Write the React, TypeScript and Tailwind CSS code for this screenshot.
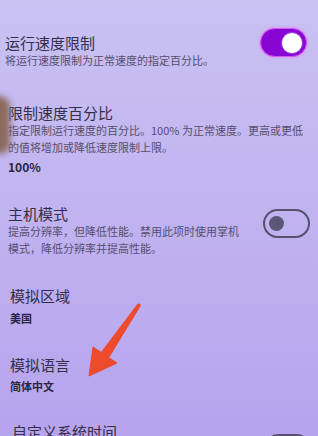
import React from "react";

const font = {
  fontFamily: '"Noto Sans CJK SC", "Noto Sans", "Liberation Sans", sans-serif',
};

function ToggleOn() {
  return (
    <div className="flex h-[29px] w-[47px] shrink-0 items-center justify-end rounded-full border border-[#d65cf0] bg-[#8806d4] pr-[3px] shadow-[0_0_3px_#e37af5]">
      <span className="h-[22px] w-[22px] rounded-full border border-[#9b3fe0] bg-white" />
    </div>
  );
}

function ToggleOff() {
  return (
    <div className="flex h-[29px] w-[47px] shrink-0 items-center rounded-full border-2 border-[#55506c] pl-[4px]">
      <span className="h-[15px] w-[15px] rounded-full bg-[#5c5676]" />
    </div>
  );
}

function Title({ children }: { children: React.ReactNode }) {
  return <div className="text-[15px] leading-[18px] whitespace-nowrap text-[#343049]">{children}</div>;
}

function Desc({ children }: { children: React.ReactNode }) {
  return <div className="text-[11px] leading-[17px] whitespace-nowrap text-[#554f6e]">{children}</div>;
}

function Value({ children, className = "" }: { children: React.ReactNode; className?: string }) {
  return (
    <div className={`text-[11px] font-bold leading-[16px] whitespace-nowrap text-[#2a2540] ${className}`}>
      {children}
    </div>
  );
}

export default function App() {
  return (
    <div
      style={font}
      className="relative h-[436px] w-[318px] overflow-hidden bg-linear-to-b from-[#c9c1f2] via-[#c0b3f0] to-[#b7a3ee] pt-[34px]"
    >
      {/* 运行速度限制 */}
      <div className="flex items-start justify-between pl-[5px] pr-[11px]">
        <div>
          <Title>运行速度限制</Title>
          <Desc>将运行速度限制为正常速度的指定百分比。</Desc>
        </div>
        <div className="-mt-[6px]">
          <ToggleOn />
        </div>
      </div>

      {/* 限制速度百分比 */}
      <div className="mt-[35px] pl-[8px]">
        <Title>限制速度百分比</Title>
        <Desc>
          指定限制运行速度的百分比。100% 为正常速度。更高或更低
          <br />
          的值将增加或降低速度限制上限。
        </Desc>
        <Value className="mt-[3px] text-[12px]">100%</Value>
      </div>

      {/* 主机模式 */}
      <div className="mt-[30px] flex items-start justify-between pl-[8px] pr-[8px]">
        <div>
          <Title>主机模式</Title>
          <Desc>
            提高分辨率，但降低性能。禁用此项时使用掌机
            <br />
            模式，降低分辨率并提高性能。
          </Desc>
        </div>
        <div className="mt-[4px]">
          <ToggleOff />
        </div>
      </div>

      {/* 模拟区域 */}
      <div className="mt-[30px] pl-[10px]">
        <Title>模拟区域</Title>
        <Value className="mt-[5px]">美国</Value>
      </div>

      {/* 模拟语言 */}
      <div className="mt-[30px] pl-[10px]">
        <Title>模拟语言</Title>
        <Value className="mt-[4px]">简体中文</Value>
      </div>

      {/* 自定义系统时间 */}
      <div className="mt-[29px] flex items-start justify-between pl-[12px] pr-[7px]">
        <Title>自定义系统时间</Title>
        <div className="mt-[11px]">
          <ToggleOff />
        </div>
      </div>

      {/* finger at the left edge */}
      <div className="pointer-events-none absolute left-[-12px] top-[96px] h-[58px] w-[22px] rounded-full bg-[#8c6a5e] blur-[3px]" />

      {/* red arrow */}
      <svg className="pointer-events-none absolute inset-0" width="318" height="436" viewBox="0 0 318 436">
        <polygon
          points="137.8,304.1 101.3,352.4 93,347 89,376 117,363 108.7,357.6 140.2,305.9"
          fill="#ee4a2c"
          stroke="#ee4a2c"
          strokeWidth="1"
          strokeLinejoin="round"
        />
        <circle cx="139" cy="305" r="1.6" fill="#ee4a2c" />
      </svg>
    </div>
  );
}
